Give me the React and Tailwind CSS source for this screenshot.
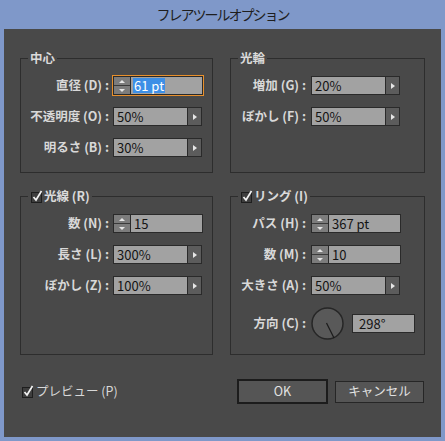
import React from 'react';

const Tri = ({ dir }) => {
    if (dir === 'right') return <div className="w-0 h-0 border-y-[3px] border-y-transparent border-l-[4px] border-l-[#e6e6e6]" />;
    if (dir === 'up') return <div className="w-0 h-0 border-x-[3px] border-x-transparent border-b-[3px] border-b-[#e6e6e6]" />;
    return <div className="w-0 h-0 border-x-[3px] border-x-transparent border-t-[3px] border-t-[#e6e6e6]" />;
};

const Check = () => (
    <svg width="13" height="13" viewBox="0 0 13 13" className="shrink-0">
        <rect x="1.5" y="2.5" width="10" height="10" fill="#3e3e3e" stroke="#1e1e1e" />
        <path d="M3.5 7 L6 10 L11.5 1" fill="none" stroke="#f2f2f2" strokeWidth="1.7" />
    </svg>
);

const Combo = ({ value }) => (
    <div className="flex h-[19px] w-[89px] border border-[#2a2a2a]">
        <div className="flex-1 bg-[#a2a2a2] text-[#141414] pl-[3px] text-[13px] leading-[17px]">{value}</div>
        <div className="w-[14px] bg-[#5c5c5c] border-l border-[#2a2a2a] flex items-center justify-center">
            <Tri dir="right" />
        </div>
    </div>
);

const Spinner = ({ value, selected }) => (
    <div className="flex h-[19px] w-[90px] border border-[#2a2a2a]">
        <div className="w-[17px] bg-[#7c7c7c] border-r border-[#2a2a2a] flex flex-col">
            <div className="flex-1 flex items-center justify-center"><Tri dir="up" /></div>
            <div className="h-px bg-[#3a3a3a]" />
            <div className="flex-1 flex items-center justify-center"><Tri dir="down" /></div>
        </div>
        <div className="flex-1 bg-[#a2a2a2] text-[#141414] pl-[2px] text-[13px] leading-[17px] flex items-center">
            {selected ? (
                <span className="bg-[#3d8fe6] text-white h-[15px] leading-[15px] px-[1px]">{value}</span>
            ) : (
                <span className="pl-[1px]">{value}</span>
            )}
        </div>
    </div>
);

const Row = ({ label, labelClass, children }) => (
    <div className="flex items-center">
        <span className={labelClass}>{label}</span>
        {children}
    </div>
);

const Panel = ({ legend, checked, height, children }) => (
    <fieldset className={`border border-[#2d2d2d] ${height}`}>
        <legend className="ml-[7px] px-[2px] h-[16px] flex items-center gap-[1px] text-[12.5px] font-bold text-[#dadada] leading-[16px]">
            {checked && <Check />}
            {legend}
        </legend>
        <div className="pt-[10px] flex flex-col gap-[12px]">{children}</div>
    </fieldset>
);

const L = 'w-[88px] mr-[4px] text-right text-[12.5px] font-bold text-[#d8d8d8] whitespace-nowrap';
const R = 'w-[75px] mr-[5px] text-right text-[12.5px] font-bold text-[#d8d8d8] whitespace-nowrap';

export default function App() {
    return (
        <div className="w-[445px] h-[441px] bg-[#7f98c9] flex flex-col px-[4px] pb-[4px] font-['Noto_Sans_CJK_JP',sans-serif]">
            <div className="h-[29px] flex items-center justify-center text-[14px] tracking-[-2px] text-[#1e1e1e]">
                フレアツールオプション
            </div>
            <div className="flex-1 bg-[#494949] pl-[16px] pr-[16px] pt-[21px]">
                <div className="grid grid-cols-[193px_195px] gap-x-[17px] gap-y-[15px]">
                    <Panel legend="中心" height="h-[123px]">
                        <Row label="直径 (D) :" labelClass={L}>
                            <div className="border border-[#e8902c] -m-px">
                                <Spinner value="61 pt" selected />
                            </div>
                        </Row>
                        <Row label="不透明度 (O) :" labelClass={L}><Combo value="50%" /></Row>
                        <Row label="明るさ (B) :" labelClass={L}><Combo value="30%" /></Row>
                    </Panel>
                    <Panel legend="光輪" height="h-[123px]">
                        <Row label="増加 (G) :" labelClass={R}><Combo value="20%" /></Row>
                        <Row label="ぼかし (F) :" labelClass={R}><Combo value="50%" /></Row>
                    </Panel>
                    <Panel legend="光線 (R)" checked height="h-[167px]">
                        <Row label="数 (N) :" labelClass={L}><Spinner value="15" /></Row>
                        <Row label="長さ (L) :" labelClass={L}><Combo value="300%" /></Row>
                        <Row label="ぼかし (Z) :" labelClass={L}><Combo value="100%" /></Row>
                    </Panel>
                    <Panel legend="リング (I)" checked height="h-[167px]">
                        <Row label="パス (H) :" labelClass={R}><Spinner value="367 pt" /></Row>
                        <Row label="数 (M) :" labelClass={R}><Spinner value="10" /></Row>
                        <Row label="大きさ (A) :" labelClass={R}><Combo value="50%" /></Row>
                        <Row label="方向 (C) :" labelClass={R}>
                            <svg width="33" height="33" viewBox="0 0 33 33" className="shrink-0">
                                <circle cx="16.5" cy="16.5" r="15.5" fill="#595959" stroke="#262626" strokeWidth="1.5" />
                                <line x1="15.5" y1="16" x2="23" y2="31" stroke="#1c1c1c" strokeWidth="1.3" />
                            </svg>
                            <div className="ml-[8px] w-[63px] h-[19px] border border-[#2a2a2a] bg-[#a2a2a2] text-[#141414] pl-[6px] text-[13px] leading-[17px]">
                                298°
                            </div>
                        </Row>
                    </Panel>
                </div>
                <div className="mt-[24px] flex items-center justify-between">
                    <div className="flex items-center gap-[2px] ml-[1px] text-[12.5px] text-[#d8d8d8]">
                        <Check />
                        <span>プレビュー (P)</span>
                    </div>
                    <div className="flex items-center gap-[7px] mr-[1px]">
                        <button className="w-[91px] h-[25px] border-2 border-[#1c1c1c] bg-[#555555] text-[12.5px] text-[#e2e2e2]">OK</button>
                        <button className="w-[89px] h-[22px] border border-[#262626] bg-[#555555] text-[12.5px] text-[#e2e2e2]">キャンセル</button>
                    </div>
                </div>
            </div>
        </div>
    );
}
